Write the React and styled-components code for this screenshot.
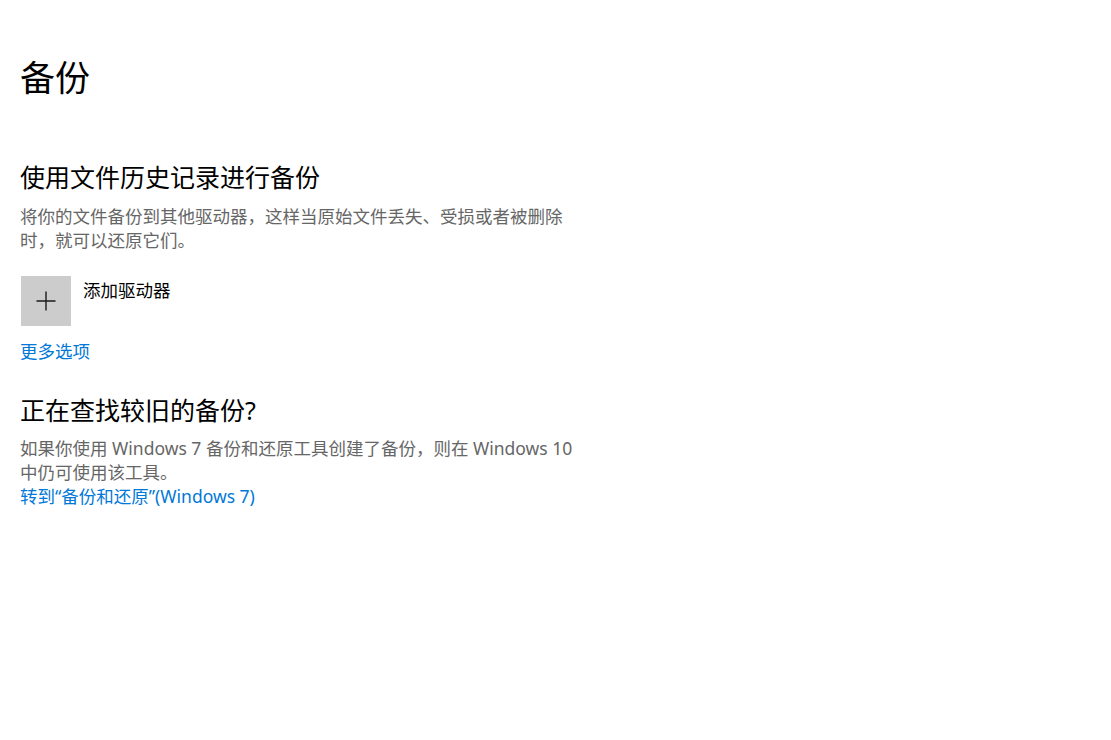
import React from 'react'
import styled, { createGlobalStyle } from 'styled-components'

const GlobalStyle = createGlobalStyle`
  html, body {
    margin: 0;
    padding: 0;
    background: #fff;
  }
  body {
    font-family: "Noto Sans", "Noto Sans CJK SC", sans-serif;
    color: #000;
  }
`

const Page = styled.div`
  padding: 56px 20px 40px 20px;
  width: 556px;
`

const PageTitle = styled.h1`
  margin: 0;
  font-size: 35px;
  line-height: 44px;
  font-weight: 400;
`

const Section = styled.section`
  margin-top: ${p => p.$top}px;
`

const SectionTitle = styled.h2`
  margin: 0;
  font-size: 25px;
  line-height: 32px;
  font-weight: 400;
`

const Description = styled.p`
  margin: ${p => p.$top || 0}px 0 0 0;
  font-size: 17.5px;
  line-height: 24px;
  color: #666;
`

const AddRow = styled.div`
  display: flex;
  align-items: flex-start;
  gap: 12px;
  margin-top: 24px;
  padding-left: 1px;
`

const AddTile = styled.button`
  width: 50px;
  height: 50px;
  border: none;
  padding: 0;
  background: #cccccc;
  display: flex;
  align-items: center;
  justify-content: center;
  cursor: pointer;
`

const AddLabel = styled.span`
  margin-top: 2px;
  font-size: 17.5px;
  line-height: 24px;
  color: #000;
`

const Link = styled.a`
  display: block;
  margin-top: ${p => p.$top || 0}px;
  font-size: 17.5px;
  line-height: 24px;
  color: #0078d7;
  text-decoration: none;
  cursor: pointer;
`

const PlusIcon = () => (
  <svg width="20" height="20" viewBox="0 0 20 20">
    <path d="M10 0.5V19.5M0.5 10H19.5" stroke="#1a1a1a" strokeWidth="1.4" fill="none" />
  </svg>
)

export default function App() {
  return (
    <>
      <GlobalStyle />
      <Page>
        <PageTitle>备份</PageTitle>

        <Section $top={61}>
          <SectionTitle>使用文件历史记录进行备份</SectionTitle>
          <Description $top={11}>
            将你的文件备份到其他驱动器，这样当原始文件丢失、受损或者被删除时，就可以还原它们。
          </Description>
          <AddRow>
            <AddTile aria-label="添加驱动器">
              <PlusIcon />
            </AddTile>
            <AddLabel>添加驱动器</AddLabel>
          </AddRow>
          <Link $top={13}>更多选项</Link>
        </Section>

        <Section $top={31}>
          <SectionTitle>正在查找较旧的备份?</SectionTitle>
          <Description $top={10}>
            如果你使用 Windows 7 备份和还原工具创建了备份，则在 Windows 10 中仍可使用该工具。
          </Description>
          <Link>转到“备份和还原”(Windows 7)</Link>
        </Section>
      </Page>
    </>
  )
}
